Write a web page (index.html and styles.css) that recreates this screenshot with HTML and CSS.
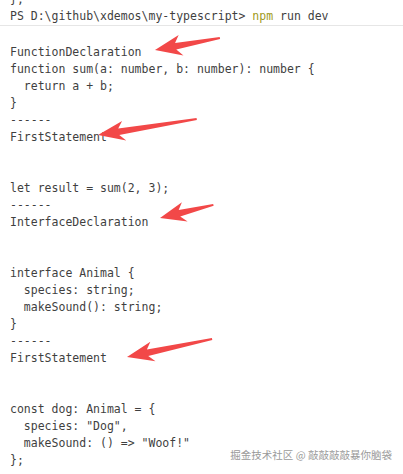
FILE: index.html
```html
<!DOCTYPE html>
<html lang="zh">
<head>
<meta charset="utf-8">
<title>terminal</title>
<link rel="stylesheet" href="styles.css">
</head>
<body>
<div class="term">
  <div class="head"><pre class="code">};
PS D:\github\xdemos\my-typescript&gt; <span class="cmd">npm</span> run dev</pre></div>
  <pre class="code body">

FunctionDeclaration
function sum(a: number, b: number): number {
  return a + b;
}
------
FirstStatement


let result = sum(2, 3);
------
InterfaceDeclaration


interface Animal {
  species: string;
  makeSound(): string;
}
------
FirstStatement


const dog: Animal = {
  species: "Dog",
  makeSound: () =&gt; "Woof!"
};</pre>
</div>
<svg class="arrows" width="403" height="474" viewBox="0 0 403 474">
  <g fill="#f24848">
    <path transform="translate(155 50) rotate(-10.5)" d="M0 0 L26 -10.5 L21 -3.2 L66 -1 L66 1 L21 3.4 L27 10.5 Z"/>
    <path transform="translate(98 135) rotate(-9.2)" d="M0 0 L26 -10 L21 -3.2 L100 -1 L100 1 L21 3.4 L27 10 Z"/>
    <path transform="translate(160 218) rotate(-13.8)" d="M0 0 L25 -10 L20 -3.2 L55 -1 L55 1 L20 3.4 L26 10 Z"/>
    <path transform="translate(127 357) rotate(-12)" d="M0 0 L26 -10 L21 -3.2 L87 -1 L87 1 L21 3.4 L27 10 Z"/>
  </g>
</svg>
<div class="mark">掘金技术社区 @ 敲敲敲敲暴你脑袋</div>
</body>
</html>
```
FILE: styles.css
```css
html, body {
  margin: 0;
  padding: 0;
  background: #ffffff;
  width: 403px;
  height: 474px;
  overflow: hidden;
}
.term {
  display: flex;
  flex-direction: column;
}
.code {
  margin: 0;
  padding: 0 0 0 10px;
  font-family: "DejaVu Sans Mono", "Liberation Mono", monospace;
  font-size: 11.5px;
  line-height: 17px;
  color: #3f3f3f;
  white-space: pre;
}
.body {
  padding-top: 1px;
}
.head {
  margin-top: -9px;
  border-bottom: 1px solid #e6e6e6;
  height: 34px;
}
.cmd {
  color: #a09a1a;
}
.arrows {
  position: absolute;
  left: 0;
  top: 0;
}
.mark {
  position: absolute;
  right: 11px;
  top: 448px;
  font-family: "Noto Sans CJK SC", sans-serif;
  font-size: 10.5px;
  line-height: 14px;
  color: #9a9a9a;
  text-shadow: 0 0 2px #ffffff;
}
```
